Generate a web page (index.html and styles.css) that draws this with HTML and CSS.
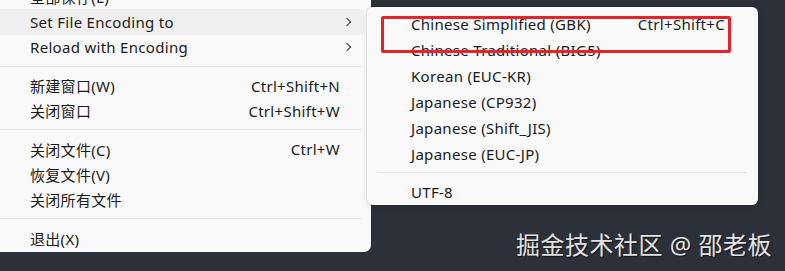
FILE: index.html
```html
<!DOCTYPE html>
<html lang="zh-CN">
<head>
    <meta charset="UTF-8">
    <title>Set File Encoding</title>
    <link rel="stylesheet" href="styles.css">
</head>
<body>
    <div class="menu">
        <div class="item">全部保存(L)</div>
        <div class="item active"><span>Set File Encoding to</span><span class="arrow"></span></div>
        <div class="item"><span>Reload with Encoding</span><span class="arrow"></span></div>
        <div class="sep"></div>
        <div class="item"><span>新建窗口(W)</span><span class="key">Ctrl+Shift+N</span></div>
        <div class="item"><span>关闭窗口</span><span class="key">Ctrl+Shift+W</span></div>
        <div class="sep"></div>
        <div class="item"><span>关闭文件(C)</span><span class="key">Ctrl+W</span></div>
        <div class="item"><span>恢复文件(V)</span></div>
        <div class="item"><span>关闭所有文件</span></div>
        <div class="sep"></div>
        <div class="item"><span>退出(X)</span></div>
    </div>

    <!-- submenu popup -->
    <div class="submenu">
        <div class="item"><span>Chinese Simplified (GBK)</span><span class="key">Ctrl+Shift+C</span></div>
        <div class="item"><span>Chinese Traditional (BIG5)</span></div>
        <div class="item"><span>Korean (EUC-KR)</span></div>
        <div class="item"><span>Japanese (CP932)</span></div>
        <div class="item"><span>Japanese (Shift_JIS)</span></div>
        <div class="item"><span>Japanese (EUC-JP)</span></div>
        <div class="sep"></div>
        <div class="item"><span>UTF-8</span></div>
    </div>

    <div class="mark"></div>
    <div class="watermark">掘金技术社区 @ 邵老板</div>
</body>
</html>
```

FILE: styles.css
```css
body { margin: 0; background: #2c3038; font-family: 'Noto Sans', 'Noto Sans CJK SC', sans-serif; font-size: 15px; letter-spacing: 0.3px; color: #1b1b1b; overflow: hidden; height: 271px; position: relative; }

.menu { width: 371px; margin-top: -16px; background: #f9f9f9; border-radius: 0 0 7px 0; padding-bottom: 1.5px; }
.menu .item { height: 25.3px; display: flex; align-items: center; justify-content: space-between; padding: 0 24px 0 30px; margin-right: 7px; border-radius: 0 4px 4px 0; }
.menu .item.active { background: #efefef; }
.menu .sep { height: 1px; background: #e3e3e3; margin: 6px 10px 6px 0; }

.arrow { width: 5px; height: 5px; border-right: 1.3px solid #333; border-top: 1.3px solid #333; transform: rotate(45deg); margin-right: -10px; }
.key { color: #1b1b1b; }

.submenu { position: absolute; left: 367px; top: 7px; width: 391px; height: 198px; box-sizing: border-box; padding-top: 4px; background: #f9f9f9; border-radius: 6px; box-shadow: 0 0 0 1px rgba(0,0,0,0.06), 0 2px 6px rgba(0,0,0,0.12); }
.submenu .item { height: 26px; display: flex; align-items: center; justify-content: space-between; padding: 0 33px 0 44px; }
.submenu .sep { height: 1px; background: #e3e3e3; margin: 5px 11px 6px; }

.mark { position: absolute; left: 381px; top: 16px; width: 350px; height: 37px; box-sizing: border-box; border: 3px solid #e5232c; border-radius: 2px; }

.watermark { position: absolute; right: 13px; top: 226px; font-size: 24px; letter-spacing: 0.5px; color: #e2e2e2; text-shadow: 1px 1px 1px rgba(0,0,0,0.6); }
```
